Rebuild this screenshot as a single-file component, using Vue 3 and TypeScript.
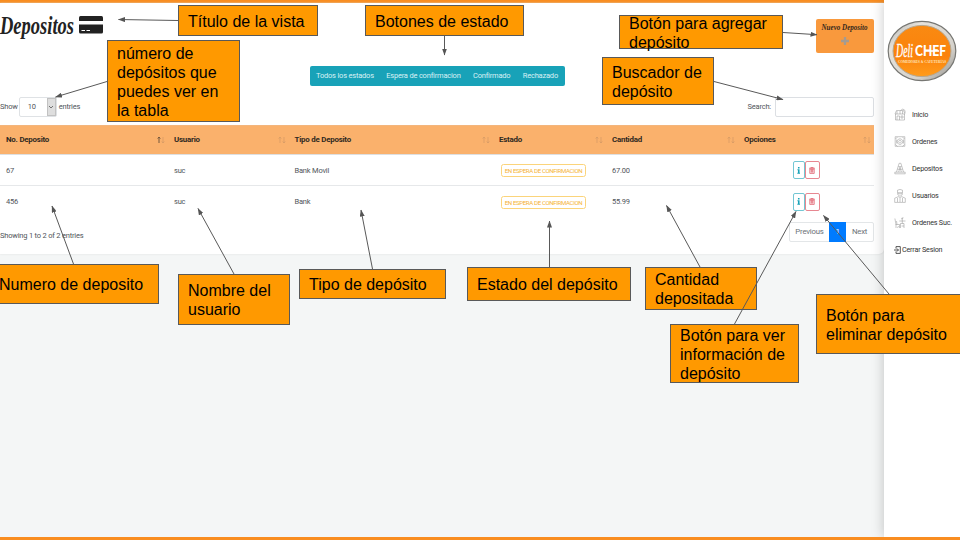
<script setup lang="ts">
interface Deposit { id: string; user: string; type: string; status: string; amount: string }
interface Note { x: number; y: number; w: number; h: number; lines: string[] }
interface Arrow { x1: number; y1: number; x2: number; y2: number }

const filters = ['Todos los estados', 'Espera de confirmacion', 'Confirmado', 'Rechazado']
const columns = ['No. Deposito', 'Usuario', 'Tipo de Deposito', 'Estado', 'Cantidad', 'Opciones']

const deposits: Deposit[] = [
  { id: '67', user: 'suc', type: 'Bank Movil', status: 'EN ESPERA DE CONFIRMACION', amount: '67.00' },
  { id: '456', user: 'suc', type: 'Bank', status: 'EN ESPERA DE CONFIRMACION', amount: '55.99' },
]

const menu: { label: string; paths: string[] }[] = [
  { label: 'Inicio', paths: ['M1 5V11H10V5M0.5 5L2 1.5H9L10.5 5ZM2.5 5V2M5.5 5V2M8 5V2M2.5 11V7H5V11M6.5 7H8.5V9H6.5ZM6 1.5Q8.5-1.5 10.5 1.5V4'] },
  { label: 'Ordenes', paths: ['M.7 .7H10.3V10.3H.7ZM5.5 2.8A2.8 2.8 0 1 1 5.4 2.8ZM5.5 4.3A1.3 1.3 0 1 1 5.4 4.3ZM1 3L3 1M8 1L10 3M1 8.5L3 10.5M8 10.5L10 8.5M2.2 3.5V7.5M9 3.5V7.5'] },
  { label: 'Depositos', paths: ['M.3 10.8H10.7V9.2H.3ZM2 9L4.6 .3H6.4L9 9M3.9 3.5H7.1M3 6.3H8M4.2 9L5.5 4L6.8 9'] },
  { label: 'Usuarios', paths: ['M3 2.7V.2Q5.5-1.3 8 .2V2.7ZM3.3 2.7V4.5Q5.5 8 7.7 4.5V2.7M.2 12.4V8.2L4 6.6L5.5 8.3L7 6.6L10.8 8.2V12.4ZM3 8V12M8 8V12M5.5 8.5V12M3.3 3.8H7.7'] },
  { label: 'Ordenes Suc.', paths: ['M.4 1.5L1.5 7.5V11M1 7.5H5V11M2.5 7.5L2 4M6 11V6.5H9.5V11M7.8 6.5V.5M4.8 4H11M6.5 2L9 .8M3 11L4 9M7 9H9.5'] },
]

const notes: Note[] = [
  { x: 178, y: 5, w: 140, h: 31, lines: ['Título de la vista'] },
  { x: 107, y: 40, w: 133, h: 82, lines: ['número de', 'depósitos que', 'puedes ver en', 'la tabla'] },
  { x: 365, y: 5, w: 159, h: 31, lines: ['Botones de estado'] },
  { x: 619, y: 15, w: 164, h: 34, lines: ['Botón para agregar', 'depósito'] },
  { x: 602, y: 57, w: 112, h: 48, lines: ['Buscador de', 'depósito'] },
  { x: -11, y: 264, w: 170, h: 40, lines: ['Numero de deposito'] },
  { x: 178, y: 274, w: 112, h: 51, lines: ['Nombre del', 'usuario'] },
  { x: 299, y: 269, w: 147, h: 30, lines: ['Tipo de depósito'] },
  { x: 467, y: 267, w: 164, h: 34, lines: ['Estado del depósito'] },
  { x: 645, y: 267, w: 112, h: 43, lines: ['Cantidad', 'depositada'] },
  { x: 670, y: 324, w: 129, h: 59, lines: ['Botón para ver', 'información de', 'depósito'] },
  { x: 816, y: 294, w: 150, h: 60, lines: ['Botón para', 'eliminar depósito'] },
]

const arrows: Arrow[] = [
  { x1: 178, y1: 20.5, x2: 118.5, y2: 19.5 },
  { x1: 107, y1: 81.5, x2: 55.5, y2: 97 },
  { x1: 444.5, y1: 36, x2: 444.5, y2: 55 },
  { x1: 783, y1: 32.5, x2: 817, y2: 34.7 },
  { x1: 714, y1: 81.5, x2: 783, y2: 99.5 },
  { x1: 73.5, y1: 264, x2: 52, y2: 206 },
  { x1: 234, y1: 274, x2: 198, y2: 208.5 },
  { x1: 372.5, y1: 269, x2: 361, y2: 210 },
  { x1: 549.5, y1: 267, x2: 549.5, y2: 221 },
  { x1: 700, y1: 267, x2: 666.5, y2: 205.5 },
  { x1: 734.5, y1: 324, x2: 796, y2: 211.5 },
  { x1: 889, y1: 294, x2: 823.5, y2: 215.5 },
]
</script>

<template>
  <div class="screen">
    <div class="page">
      <main class="main">
        <section class="card">
          <header class="heading">
            <h1 class="title">
              <svg class="title-word" viewBox="0 0 76 34"><text x="0" y="23.5" textLength="74" lengthAdjust="spacingAndGlyphs">Depositos</text></svg>
              <svg class="card-icon" viewBox="0 0 24 18"><path d="M0 5V1.5Q0 0 1.5 0H22.5Q24 0 24 1.5V5Z" /><path d="M0 8.5H24V16Q24 17.5 22.5 17.5H1.5Q0 17.5 0 16Z" /><path class="dash" d="M2.5 14.5H6M7.5 14.5H11" /></svg>
            </h1>
            <button class="new-button">
              <svg class="new-word" viewBox="0 0 50 12"><text x="1.5" y="9" textLength="46" lengthAdjust="spacingAndGlyphs">Nuevo Deposito</text></svg>
              <svg class="plus" viewBox="0 0 8 8"><path d="M4 0V8M0 4H8" /></svg>
            </button>
          </header>

          <div class="filters">
            <button v-for="f in filters" :key="f" class="filter">{{ f }}</button>
          </div>

          <div class="controls">
            <label class="length">Show
              <span class="select"><span class="value">10</span><span class="caret"><svg viewBox="0 0 6 4"><path d="M1 1L3 3L5 1" /></svg></span></span>
              entries</label>
            <label class="search">Search:<input class="search-input" type="text" /></label>
          </div>

          <div class="row head">
            <div v-for="(c, i) in columns" :key="c" class="cell">
              <b>{{ c }}</b>
              <svg class="sort" viewBox="0 0 8 8"><path :class="{ active: i === 0 }" d="M2 7V1M.7 2.5L2 1L3.3 2.5" /><path d="M6 1V7M4.7 5.5L6 7L7.3 5.5" /></svg>
            </div>
          </div>
          <div v-for="d in deposits" :key="d.id" class="row">
            <div class="cell">{{ d.id }}</div>
            <div class="cell">{{ d.user }}</div>
            <div class="cell">{{ d.type }}</div>
            <div class="cell"><span class="badge">{{ d.status }}</span></div>
            <div class="cell">{{ d.amount }}</div>
            <div class="cell options">
              <button class="action info"><svg viewBox="0 0 4 8"><path d="M1.1 0H2.9V1.7H1.1ZM.5 2.7H2.9V6.6H3.6V7.8H.4V6.6H1.1V3.8H.5Z" /></svg></button>
              <button class="action trash"><svg viewBox="0 0 7 8"><path d="M0 1.4H7M2.2 1.2V.4H4.8V1.2M.9 2.3V7.4H6.1V2.3M2.5 2.6V6.4M3.5 2.6V6.4M4.5 2.6V6.4M1 2.4H6" /></svg></button>
            </div>
          </div>

          <footer class="footer">
            <span class="summary">Showing 1 to 2 of 2 entries</span>
            <nav class="pager"><span class="prev">Previous</span><span class="current">1</span><span class="next">Next</span></nav>
          </footer>
        </section>
      </main>

      <aside class="sidebar">
        <svg class="logo" viewBox="0 0 70 62">
          <defs>
            <linearGradient id="rim" x1="0" y1="0" x2="1" y2="1"><stop offset="0" stop-color="#aaa9a4" /><stop offset=".25" stop-color="#e5e2dc" /><stop offset=".7" stop-color="#d5d2cc" /><stop offset="1" stop-color="#8b8985" /></linearGradient>
            <linearGradient id="face" x1="0" y1="0" x2="0" y2="1"><stop offset="0" stop-color="#f98a12" /><stop offset=".6" stop-color="#fb820b" /><stop offset="1" stop-color="#ff9c1c" /></linearGradient>
          </defs>
          <ellipse cx="35" cy="31" rx="33.8" ry="29.6" fill="url(#rim)" stroke="#777773" stroke-width="1.2" />
          <ellipse cx="35" cy="31" rx="29" ry="25.6" fill="url(#face)" stroke="#b7a78f" stroke-width="1" />
          <text class="deli" x="9" y="37" textLength="17" lengthAdjust="spacingAndGlyphs">Deli</text>
          <text class="chef" x="28" y="36" textLength="31" lengthAdjust="spacingAndGlyphs">CHEF</text>
          <path d="M38 31H52" stroke="#fff" stroke-width="1.6" />
          <text class="tag" x="11" y="43" textLength="48" lengthAdjust="spacingAndGlyphs">COMEDORES &amp; CAFETERÍAS</text>
        </svg>
        <nav class="menu">
          <a v-for="m in menu" :key="m.label" class="item">
            <svg viewBox="-.5 -1 12 14"><path v-for="p in m.paths" :key="p" :d="p" /></svg>{{ m.label }}
          </a>
          <a class="logout"><svg viewBox="0 0 7 8"><path d="M2 2.5V.6H6.3V7.4H2V5.5M0 4H4.3M3 2.5L4.5 4L3 5.5" /></svg>Cerrar Sesion</a>
        </nav>
      </aside>
    </div>
    <div class="bottom-bar"></div>

    <div v-for="n in notes" :key="n.lines[0]" class="note" :style="{ left: n.x + 'px', top: n.y + 'px', width: n.w + 'px', height: n.h + 'px' }">
      <div v-for="l in n.lines" :key="l">{{ l }}</div>
    </div>
    <svg class="arrows" viewBox="0 0 960 540">
      <defs><marker id="tip" viewBox="0 0 7 5" refX="6.5" refY="2.5" markerWidth="7" markerHeight="5" markerUnits="userSpaceOnUse" orient="auto"><path d="M0 0L7 2.5L0 5Z" fill="#555" /></marker></defs>
      <line v-for="(a, i) in arrows" :key="i" :x1="a.x1" :y1="a.y1" :x2="a.x2" :y2="a.y2" marker-end="url(#tip)" />
    </svg>
  </div>
</template>

<style>
body { margin: 0; overflow: hidden; }
</style>

<style scoped>
* { box-sizing: border-box; }
button { font: inherit; letter-spacing: inherit; padding: 0; margin: 0; border: 0; }
.screen { position: relative; width: 960px; height: 540px; overflow: hidden; display: flex; flex-direction: column; font: 7.5px/10px Roboto, sans-serif; letter-spacing: -.2px; color: #50555a; }
.page { flex: 1; min-height: 0; display: flex; background: #f4f6f6; }
.main { width: 884px; border-top: 3px solid #f98d20; }
.card { height: 251px; background: #fff; border-radius: 0 0 5px 0; box-shadow: 0 0 2px #d8dbdb; }
.heading { height: 63px; display: flex; justify-content: space-between; align-items: flex-start; padding: 16px 10px 0 0; }
.title { margin: -9px 0 0; display: flex; align-items: flex-start; gap: 3px; }
.title-word { width: 76px; height: 34px; overflow: visible; }
.title-word text { font: italic 700 25px "Liberation Serif", serif; letter-spacing: 0; fill: #222; }
.card-icon { width: 24px; height: 18px; margin-top: 6px; fill: #222; }
.dash { stroke: #fff; stroke-width: 1.2; }
.new-button { width: 58px; height: 34px; border-radius: 2px; background: #f9993d; display: flex; flex-direction: column; align-items: center; padding-top: 2px; gap: 4px; }
.new-word { width: 50px; height: 12px; overflow: visible; }
.new-word text { font: italic 700 9px "Liberation Serif", serif; letter-spacing: 0; fill: #35281c; }
.plus { width: 8px; height: 8px; }
.plus path { stroke: #a59b91; stroke-width: 2.3; }
.filters { width: 255px; height: 20px; margin-left: 309.5px; display: flex; background: #18a2b8; border-radius: 2px; padding: 0 6.5px; justify-content: space-between; align-items: center; }
.filter { background: none; color: #d9f1f5; font-size: 7.5px; white-space: nowrap; }
.controls { height: 39px; padding: 11px 10px 8px 0; display: flex; justify-content: space-between; align-items: center; }
.length, .search { display: flex; align-items: center; }
.select { width: 38px; height: 20px; margin: 0 2px 0 1px; border: 1px solid #dfe2e5; border-radius: 2px; display: flex; }
.value { flex: 1; display: flex; align-items: center; padding-left: 8px; }
.caret { width: 9px; background: #dedede; border: 1px solid #c2c2c2; display: flex; align-items: center; justify-content: center; }
.caret svg { width: 6px; height: 4px; fill: none; stroke: #555; stroke-width: .8; }
.search { gap: 4px; }
.search-input { width: 99px; height: 20px; padding: 0; border: 1px solid #dcdfe3; border-radius: 2px; background: #fff; }
.row { width: 874px; height: 31px; display: grid; grid-template-columns: 168px 120.5px 204.5px 113px 132px 136px; border-bottom: 1px solid #e6e8ea; }
.row:nth-last-child(2) { border: 0; }
.head { height: 30px; background: #fab16c; color: #30291f; border-bottom: 1px solid #dedfe0; border-top: 1px solid #f3b57c; }
.cell { display: flex; align-items: center; padding: 1px 0 0 6px; }
.head .cell { justify-content: space-between; padding: 0 3px 0 6px; }
.cell b { font-weight: 700; font-size: 7.9px; letter-spacing: -.22px; }
.sort { width: 8px; height: 8px; fill: none; stroke: #d29a65; stroke-width: .7; }
.sort .active { stroke: #75583d; stroke-width: 1; }
.badge { margin-left: 2px; width: 85px; height: 13px; border: 1px solid #fbd47b; border-radius: 2.5px; color: #f5b335; font-size: 6.1px; letter-spacing: -.36px; line-height: 11px; text-align: center; white-space: nowrap; }
.options { padding: 0 0 0 54.5px; }
.action { width: 12px; height: 18px; border: 1px solid #73c6d3; border-radius: 2px; background: #fff; display: flex; align-items: center; justify-content: center; }
.info svg { width: 3.5px; height: 7px; fill: #17a2b8; }
.action.trash { width: 15px; border-color: #e78791; }
.trash svg { width: 6px; height: 7px; fill: none; stroke: #dc4c5c; stroke-width: .8; }
.footer { display: flex; justify-content: space-between; padding: 5px 10px 0 0; }
.summary { padding-top: 9px; }
.pager { height: 20px; display: flex; line-height: 18px; text-align: center; font-size: 7.8px; letter-spacing: -.22px; color: #6c7278; border: 1px solid #e3e6e8; border-radius: 2px; }
.prev { width: 39px; }
.current { width: 17px; margin: -1px 0; line-height: 20px; background: #007bff; color: #fff; }
.next { width: 27px; }
.sidebar { width: 76px; background: #fff; box-shadow: 0 0 12px rgba(0, 0, 0, .22); padding: 20px 0 0 3px; position: relative; color: #333; }
.logo { display: block; width: 70px; height: 62px; overflow: visible; }
.deli { font: italic 400 18px "Liberation Serif", serif; letter-spacing: 0; fill: #fff; stroke: #fff; stroke-width: .3; }
.chef { font: 900 14.5px Lato, sans-serif; letter-spacing: 0; fill: #fff; }
.tag { font: 700 4.8px "Liberation Serif", serif; letter-spacing: 0; fill: #ffe5bd; }
.menu { display: flex; flex-direction: column; padding: 19px 0 0 7px; }
.item { height: 27px; display: flex; align-items: center; gap: 6px; white-space: nowrap; font-size: 7.2px; }
.item svg { width: 12px; height: 14px; fill: none; stroke: #999; stroke-width: .55; }
.logout { height: 27px; display: flex; align-items: center; gap: 1px; white-space: nowrap; font-size: 7.2px; }
.logout svg { width: 7px; height: 8px; fill: none; stroke: #444; stroke-width: .9; }
.bottom-bar { height: 3px; background: #f98d20; position: relative; }
.note { position: absolute; background: #f90; border: 1px solid #595959; padding: 1px 0 0 9px; display: flex; flex-direction: column; justify-content: center; font: 16px/19px "Liberation Sans", Arial, sans-serif; letter-spacing: 0; color: #000; white-space: nowrap; }
.arrows { position: absolute; left: 0; top: 0; width: 960px; height: 540px; pointer-events: none; }
.arrows line { stroke: #595959; stroke-width: 1; }
</style>
